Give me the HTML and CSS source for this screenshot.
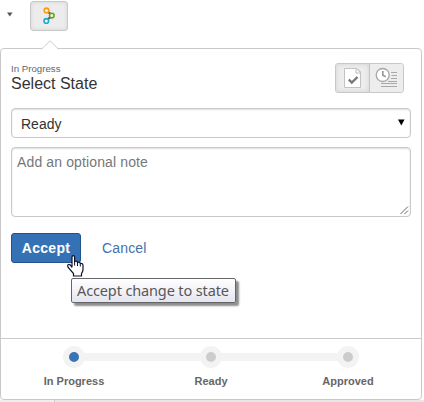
FILE: index.html
```html
<!DOCTYPE html>
<html lang="en">
<head>
<meta charset="utf-8">
<title>Select State</title>
<link rel="stylesheet" href="styles.css">
</head>
<body>
<div class="toolbar">
  <svg class="caret" width="6" height="5" viewBox="0 0 6 5"><path d="M0 0.5h5.5L2.75 4.5z" fill="#555"/></svg>
  <button class="flow-button" aria-label="State">
    <svg width="14" height="18" viewBox="0 0 14 18" fill="none" stroke-width="1.6">
      <path d="M4.500 4.500L7.500 7M4.500 12.500L7.500 10" stroke="#555" stroke-width="2.200"/>
      <circle cx="3.500" cy="3.400" r="2.300" stroke="#f79a1c" fill="#f4f4f4"/>
      <circle cx="8.800" cy="8.600" r="2.300" stroke="#6a9f22" fill="#f4f4f4"/>
      <circle cx="3.300" cy="13.900" r="2.300" stroke="#1ca9d0" fill="#f4f4f4"/>
    </svg>
  </button>
</div>
<main class="popup">
  <svg class="pointer" width="18" height="10" viewBox="0 0 18 10"><path d="M0 10L9 1l9 9z" fill="#fff"/><path d="M0.5 9L9 .8 17.5 9" fill="none" stroke="#ccc"/></svg>
  <section class="content">
    <header class="heading">
      <div>
        <div class="current">In Progress</div>
        <h1>Select State</h1>
      </div>
      <div class="views">
        <button class="view active" aria-label="State">
          <svg width="20" height="22" viewBox="0 0 20 22">
            <path d="M1.5 1.5h12l4 4v15h-16z" fill="#fff" stroke="#c2c2c2"/>
            <path d="M13 1.5v4.5h4.5M14.5 2l3 3" fill="none" stroke="#bbb"/>
            <path d="M5.8 12.500l3 3L14.5 10" fill="none" stroke="#74777c" stroke-width="2.4"/>
          </svg>
        </button>
        <button class="view" aria-label="History">
          <svg width="23" height="22" viewBox="0 0 23 22" fill="none">
            <path d="M16 5.500h6M16.500 8.500h5.500M16 11.500h6M13 14.500h9M6 16.500h16M6 19.500h16" stroke="#aaa"/>
            <circle cx="7.700" cy="8" r="6.500" fill="#fff" stroke="#a5a5a5" stroke-width="1.300"/>
            <path d="M7.800 4v4.300l3 1.500" fill="none" stroke="#999" stroke-width="1.700"/>
          </svg>
        </button>
      </div>
    </header>
    <div class="field select"><span>Ready</span><svg width="7" height="7" viewBox="0 0 7 7"><path d="M0 0.500h6.600L3.300 6.500z" fill="#000"/></svg></div>
    <div class="field note"><span>Add an optional note</span><svg class="grip" width="9" height="9" viewBox="0 0 9 9"><path d="M.5 8L8 .5M4.500 8L8 4.500" stroke="#666" stroke-width="1"/></svg></div>
    <div class="actions"><button class="accept">Accept</button><a class="cancel">Cancel</a></div>
  </section>
  <footer class="steps">
    <div class="step current-step"><i></i><b>In Progress</b></div>
    <div class="step"><i></i><b>Ready</b></div>
    <div class="step"><i></i><b>Approved</b></div>
  </footer>
</main>
<div class="strip"></div>
<div class="tooltip"><span>Accept change to state</span></div>
<svg class="cursor" width="17" height="22" viewBox="0 0 17 22"><path d="M5 12V2.200Q5 .7 6.300.7T7.600 2.200V6.500Q10 5.400 10.500 7.500Q12.700 6.500 13.300 8.500Q16 8 16 10.500V14.500Q16 16.500 14.500 18.500V21H6.500V18.500L1.200 12.500Q0 10 1.600 9.500T5 12.500" fill="#fff" stroke="#111126" stroke-width="1.200"/><path d="M7.600 6.500v4M10.500 7.500v3.500M13.300 8.500v3" stroke="#111126"/></svg>
</body>
</html>
```
FILE: styles.css
```css
* { box-sizing: border-box; }
html, body { height: 402px; overflow: hidden; }
body {
  margin: 0;
  position: relative;
  background: #fff;
  color: #333;
  font-family: "Liberation Sans", Arial, sans-serif;
}
svg { display: block; flex: none; }
button { margin: 0; padding: 0; font-family: inherit; }
.toolbar { height: 48px; padding: 1px 0 0 7px; display: flex; align-items: flex-start; }
.caret { margin: 11px 17px 0 0; }
.flow-button {
  width: 38px;
  height: 30px;
  border: 1px solid #c8c8c8;
  border-radius: 3px;
  background: #ececec;
  box-shadow: inset 0 0 4px #d5d5d5;
  display: flex;
  align-items: center;
  padding: 0 0 0 12px;
}
.popup {
  position: relative;
  width: 422px;
  height: 352px;
  border: 1px solid #c9c9c9;
  border-radius: 4px;
  background: #fff;
}
.pointer { position: absolute; left: 40px; top: -9px; }
.content { height: 289px; padding: 14px 10px 0; }
.heading { height: 45px; display: flex; justify-content: space-between; padding-right: 7px; }
.current { font-size: 9.700px; line-height: 12px; color: #666; }
h1 { margin: 0; font-size: 16px; line-height: 18px; font-weight: 400; }
.views { display: flex; height: 30px; border: 1px solid #c8c8c8; border-radius: 3px; background: #ececec; overflow: hidden; }
.view { width: 33px; border: 0; background: #ededed; display: flex; align-items: center; justify-content: center; }
.view.active { width: 34px; border-right: 1px solid #c5c5c5; box-shadow: inset 0 0 5px #d2d2d2; }
.view svg { margin-top: -1px; }
.field {
  width: 400px;
  border: 1px solid #c9c9c9;
  border-radius: 4px;
  box-shadow: inset 0 1px 2px #ddd;
  font-size: 14px;
}
.select { height: 30px; display: flex; align-items: center; justify-content: space-between; padding: 2px 5px 0 9px; }
.select svg { margin-top: -3px; }
.note { margin-top: 9px; height: 70px; padding: 6px 5px; line-height: 16px; color: #777; letter-spacing: .13px; position: relative; }
.grip { position: absolute; right: 1px; bottom: 1px; }
.actions { margin-top: 16px; display: flex; align-items: center; gap: 21px; }
.accept {
  width: 70px;
  height: 30px;
  border: 1px solid #22558c;
  border-radius: 3px;
  background: #3572b5;
  color: #fff;
  font-size: 14px;
  font-weight: 700;
  letter-spacing: .3px;
}
.cancel { font-size: 14px; letter-spacing: .15px; color: #4272ad; }
.steps { height: 61px; border-top: 1px solid #c9c9c9; display: flex; padding: 7px 4.500px 0; }
.step { width: 137px; display: flex; flex-direction: column; align-items: center; position: relative; }
.step i { width: 22px; height: 22px; border: 6px solid #f3f3f3; border-radius: 50%; background: #ccc; position: relative; z-index: 1; }
.current-step i { background: #3974b4; }
.step + .step::before { content: ""; position: absolute; top: 7px; right: 50%; width: 137px; height: 8px; background: #f3f3f3; }
.step b { margin-top: 7px; font-size: 11px; line-height: 13px; color: #666; white-space: nowrap; }
.strip { height: 2px; background: linear-gradient(90deg, #eee 54px, #ccc 54px, #ccc 55px, #e6e6e6 55px); }
.tooltip {
  position: absolute;
  left: 71px;
  top: 278px;
  width: 165px;
  height: 25px;
  padding-left: 5px;
  border: 1px solid #666;
  border-radius: 2px;
  background: linear-gradient(#fff, #e5e5f1);
  box-shadow: 3px 3px 2px rgba(0, 0, 0, .45);
  color: #575757;
  font: 14.500px/23px "Noto Sans", "Open Sans", sans-serif;
  letter-spacing: -.13px;
  white-space: nowrap;
}
.cursor { position: absolute; left: 67px; top: 255px; }
```
